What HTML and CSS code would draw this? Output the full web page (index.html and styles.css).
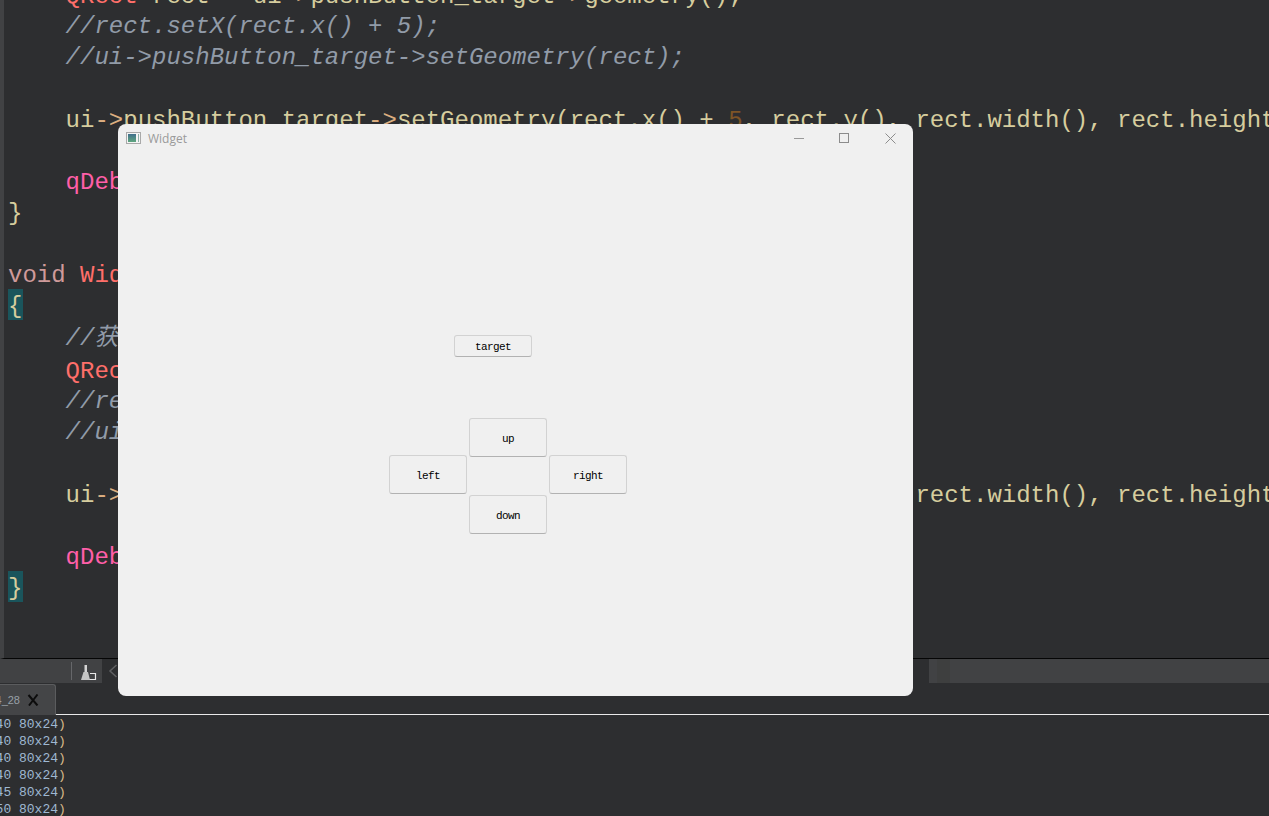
FILE: index.html
```html
<!DOCTYPE html>
<html lang="en">
<head>
<meta charset="utf-8">
<title>Widget</title>
<link rel="stylesheet" href="styles.css">
</head>
<body>
<div class="ide">
  <main class="editor">
    <div class="code">
      <div class="line"><span class="type">    QRect</span> <span class="id">rect = ui</span><span class="op">-&gt;</span><span class="id">pushButton_target</span><span class="op">-&gt;</span><span class="id">geometry();</span></div>
      <div class="line cm">    //rect.setX(rect.x() + 5);</div>
      <div class="line cm">    //ui-&gt;pushButton_target-&gt;setGeometry(rect);</div>
      <div class="line"></div>
      <div class="line"><span class="id">    ui</span><span class="op">-&gt;</span><span class="id">pushButton_target</span><span class="op">-&gt;</span><span class="id">setGeometry(rect.x() + </span><span class="num">5</span><span class="id">, rect.y(), rect.width(), rect.height(), rect.height());</span></div>
      <div class="line"></div>
      <div class="line"><span class="dbg">    qDebug</span><span class="id">() &lt;&lt; rect;</span></div>
      <div class="line id">}</div>
      <div class="line"></div>
      <div class="line"><span class="kw">void</span> <span class="type">Widget</span><span class="id">::on_pushButton_right_clicked()</span></div>
      <div class="line"><span class="id hl">{</span></div>
      <div class="line cm cjk">    //获取当前位置</div>
      <div class="line"><span class="type">    QRect</span> <span class="id">rect = ui</span><span class="op">-&gt;</span><span class="id">pushButton_target</span><span class="op">-&gt;</span><span class="id">geometry();</span></div>
      <div class="line cm">    //rect.setX(rect.x() + 5);</div>
      <div class="line cm">    //ui-&gt;pushButton_target-&gt;setGeometry(rect);</div>
      <div class="line"></div>
      <div class="line"><span class="id">    ui</span><span class="op">-&gt;</span><span class="id">pushButton_target</span><span class="op">-&gt;</span><span class="id">setGeometry(rect.x() + </span><span class="num">5</span><span class="id">, rect.y(), rect.width(), rect.height(), rect.height());</span></div>
      <div class="line"></div>
      <div class="line"><span class="dbg">    qDebug</span><span class="id">() &lt;&lt; rect;</span></div>
      <div class="line"><span class="id hl">}</span></div>
    </div>
  </main>

  <div class="toolbar">
    <div class="strip strip-left">
      <span class="sep"></span>
      <svg class="broom" viewBox="0 0 16 16" width="16" height="16" aria-hidden="true">
        <path d="M3.500 0h2.500v7h-2.500z" fill="#d4d4d4"/>
        <path d="M2.500 7h4.500l2 8H0z" fill="#c4c4c4"/>
        <path d="M9 8.500h5.500v6h-6" fill="none" stroke="#e8e8e8" stroke-width="1.200"/>
      </svg>
    </div>
    <svg class="chev" viewBox="0 0 10 14" width="10" height="14" aria-hidden="true">
      <path d="M8.500 1L2 7l6.500 6" fill="none" stroke="#5f6062" stroke-width="1.500"/>
    </svg>
    <div class="strip strip-right"><span class="strip-seg"></span></div>
  </div>

  <div class="tabs">
    <div class="tab">
      <span class="tab-label"><span>4_28</span></span>
      <svg class="tab-x" viewBox="0 0 12 12" width="12" height="12" aria-hidden="true">
        <path d="M1.500 1l9 10.500M10.500 .5L7 5 2 11.500" fill="none" stroke="#0c0c0c" stroke-width="2"/>
      </svg>
    </div>
  </div>

  <pre class="output"><span>40 80x24<i>)</i></span>
<span>40 80x24<i>)</i></span>
<span>40 80x24<i>)</i></span>
<span>40 80x24<i>)</i></span>
<span>45 80x24<i>)</i></span>
<span>50 80x24<i>)</i></span></pre>
</div>

<section class="window">
  <header class="titlebar">
    <svg class="app-icon" viewBox="0 0 15 12" width="15" height="12" aria-hidden="true">
      <defs>
        <linearGradient id="appfill" x1="0" y1="0" x2="0" y2="1">
          <stop offset="0" stop-color="#3f6f8c"/>
          <stop offset="1" stop-color="#5fa67f"/>
        </linearGradient>
      </defs>
      <rect x=".5" y=".5" width="14" height="11" fill="#f4f4f4" stroke="#a9a9a9"/>
      <rect x="2" y="2" width="8" height="8" fill="url(#appfill)"/>
      <rect x="12" y="2" width="1" height="8" fill="#8fb0a8"/>
    </svg>
    <span class="title">Widget</span>
    <div class="controls">
      <svg class="ctl-min" viewBox="0 0 11 11" width="11" height="11" aria-hidden="true"><path d="M0 5.500h10" stroke="#999" fill="none"/></svg>
      <svg viewBox="0 0 11 11" width="11" height="11" aria-hidden="true"><rect x=".5" y=".5" width="9" height="9" stroke="#8c8c8c" fill="none"/></svg>
      <svg viewBox="0 0 11 11" width="11" height="11" aria-hidden="true"><path d="M.5 .5l10 10M10.500 .5l-10 10" stroke="#8c8c8c" fill="none"/></svg>
    </div>
  </header>
  <div class="client">
    <button class="btn btn-target" type="button">target</button>
    <div class="dpad">
      <div class="col col-side"><button class="btn btn-big" type="button">left</button></div>
      <div class="col col-mid">
        <button class="btn btn-big" type="button">up</button>
        <button class="btn btn-big" type="button">down</button>
      </div>
      <div class="col col-side"><button class="btn btn-big" type="button">right</button></div>
    </div>
  </div>
</section>
</body>
</html>
```
FILE: styles.css
```css
* { box-sizing: border-box; }

html, body {
  margin: 0;
  height: 816px;
  overflow: hidden;
  background: #2d2e30;
}

.ide {
  display: flex;
  flex-direction: column;
  height: 816px;
}

.editor {
  height: 659px;
  flex: none;
  overflow: hidden;
  border-left: 4px solid #414244;
  border-bottom: 1px solid #050505;
  background: #2d2e30;
}

.code {
  margin-top: -21px;
  padding-left: 4px;
  font: 24px "Liberation Mono", monospace;
}

.line {
  height: 31px;
  line-height: 36px;
  white-space: pre;
}

.id { color: #d6cd9e; }
.op { color: #dcae80; }
.type { color: #ff6f6a; }
.kw { color: #cf9a9a; }
.dbg { color: #ff5fa8; }
.num { color: #7d5426; }
.cm { color: #919ba8; font-style: italic; line-height: 34px; }
.cjk { height: 34px; line-height: 38px; font-family: "Liberation Mono", "Noto Sans CJK SC", monospace; }
.hl { display: block; background: #1a555c; height: 31px; width: 15px; }

.toolbar {
  display: flex;
  align-items: flex-start;
  height: 24px;
  flex: none;
}

.strip { background: #414244; height: 24px; }
.strip-left {
  width: 102px;
  display: flex;
  align-items: center;
  padding-left: 71px;
  gap: 9px;
}
.strip-right {
  margin-left: auto;
  width: 340px;
  padding-left: 8px;
}
.strip-seg { display: block; width: 13px; height: 24px; background: #3e3f3f; }
.sep { width: 1px; height: 18px; background: #66676a; }
.broom { margin-top: 3px; }
.chev { margin: 5px 0 0 6px; }

.tabs {
  height: 32px;
  flex: none;
  border-bottom: 1px solid #e9e9e9;
  padding-top: 1px;
}

.tab {
  width: 56px;
  height: 31px;
  background: #444547;
  border-top: 1px solid #5b5c5e;
  border-right: 1px solid #5b5c5e;
  border-radius: 0 3px 0 0;
  display: flex;
  align-items: center;
  gap: 7px;
  position: relative;
  overflow: hidden;
}

.tab-label {
  width: 20px;
  flex: none;
  display: flex;
  justify-content: flex-end;
  font: 11px "Liberation Sans", sans-serif;
  color: #98a0a8;
  white-space: nowrap;
  overflow: hidden;
}
.tab-x { flex: none; }

.output {
  margin: 1px 0 0 -4.400px;
  font: 13px/17px "Liberation Mono", monospace;
  color: #9fb8d2;
  overflow: hidden;
}
.output i { color: #d8b98a; font-style: normal; }

.window {
  position: absolute;
  left: 118px;
  top: 124px;
  width: 795px;
  height: 572px;
  background: #f0f0f0;
  border-radius: 8px;
}

.titlebar {
  height: 28px;
  display: flex;
  align-items: center;
  padding: 0 17px 0 8px;
}
.title {
  margin-left: 7px;
  font: 12px "Open Sans", sans-serif;
  color: #9a9a9a;
}
.controls {
  margin-left: auto;
  margin-top: 1px;
  display: flex;
  gap: 35px;
}
.ctl-min { margin-right: -1px; }

.client {
  padding: 183px 0 0 271px;
  display: flex;
  flex-direction: column;
  align-items: flex-start;
}

.btn {
  width: 78px;
  padding: 2px 0 0;
  background: #f0f0f0;
  border: 1px solid #d2d2d2;
  border-bottom-color: #b2b2b2;
  border-radius: 3px;
  font: 11px "Liberation Mono", monospace;
  letter-spacing: -0.600px;
  color: #000;
}
.btn-target { height: 22px; margin-left: 65px; }
.btn-big { height: 39px; }

.dpad {
  margin-top: 61px;
  display: flex;
  gap: 2px;
}
.col { display: flex; flex-direction: column; }
.col-side { padding-top: 37px; }
.col-mid { height: 116px; justify-content: space-between; }
```
